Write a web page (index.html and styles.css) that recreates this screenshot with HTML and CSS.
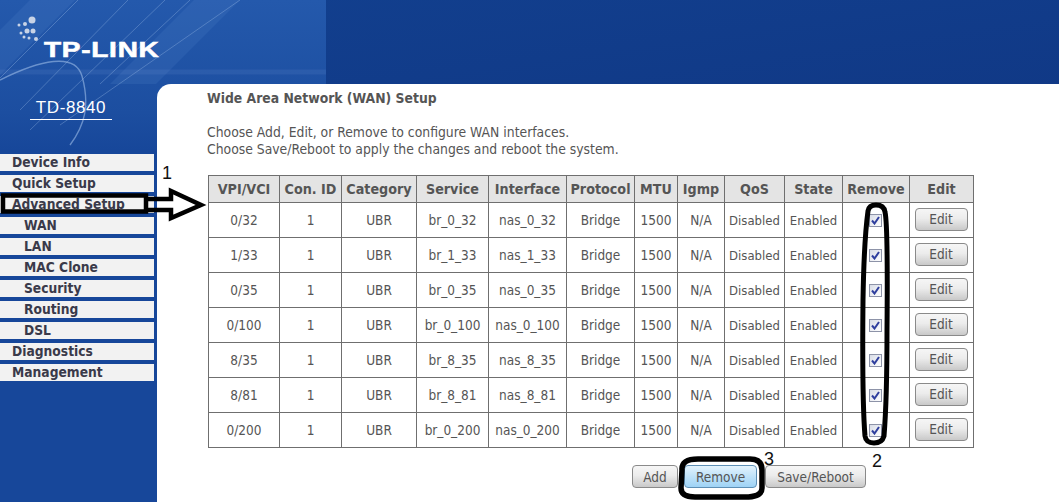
FILE: index.html
```html
<!DOCTYPE html>
<html lang="en">
<head>
<meta charset="utf-8">
<title>Wide Area Network (WAN) Setup</title>
<link rel="stylesheet" href="styles.css">
</head>
<body>
<div class="page">
  <svg class="art" width="1059" height="150" viewBox="0 0 1059 150" aria-hidden="true">
    <defs>
      <linearGradient id="top" x1="0" y1="0" x2="1" y2="1">
        <stop offset="0" stop-color="#12408f"/>
        <stop offset="1" stop-color="#103784"/>
      </linearGradient>
      <linearGradient id="panel" x1="0" y1="0" x2="0" y2="1">
        <stop offset="0" stop-color="#2459ac"/>
        <stop offset="0.75" stop-color="#1c4ea0"/>
        <stop offset="1" stop-color="#17479a"/>
      </linearGradient>
    </defs>
    <rect width="1059" height="150" fill="url(#top)"/>
    <rect width="326" height="150" fill="url(#panel)"/>
    <path d="M0 30L30 0H75L0 75Z M110 84L194 0H240L156 84Z" fill="#5f8fd6" fill-opacity=".16"/>
    <g fill="none" stroke="#9dbce8" stroke-opacity=".35">
      <path d="M0 78L78 0M20 110L128 0M30 130L165 0M60 125L240 0M100 84L190 0"/>
      <path d="M0 80C40 60 75 52 82 76C90 105 85 125 70 145" stroke-opacity=".6" stroke-width="1.4"/>
      <path d="M0 72H326" stroke-opacity=".1" stroke-width="5"/>
    </g>
    <g fill="#c8d3e6">
      <circle cx="32" cy="20" r="3.5"/><circle cx="25" cy="24" r="2"/><circle cx="19" cy="25" r="1.5"/>
      <circle cx="33" cy="31" r="2.5"/><circle cx="27" cy="31" r="2.5"/><circle cx="21" cy="33" r="1.5"/>
      <circle cx="36" cy="39" r="2"/><circle cx="29" cy="38" r="1.5"/><circle cx="24" cy="37" r="1.5"/>
    </g>
  </svg>
  <aside class="side">
    <div class="logo">TP-LINK</div>
    <div class="model">TD-8840</div>
    <nav class="menu">
      <a class="item">Device Info</a>
      <a class="item">Quick Setup</a>
      <a class="item">Advanced Setup</a>
      <a class="item sub">WAN</a>
      <a class="item sub">LAN</a>
      <a class="item sub">MAC Clone</a>
      <a class="item sub">Security</a>
      <a class="item sub">Routing</a>
      <a class="item sub">DSL</a>
      <a class="item">Diagnostics</a>
      <a class="item">Management</a>
    </nav>
  </aside>
  <main class="main">
    <h1 class="title">Wide Area Network (WAN) Setup</h1>
    <p class="intro">Choose Add, Edit, or Remove to configure WAN interfaces.<br>Choose Save/Reboot to apply the changes and reboot the system.</p>
    <table class="wan">
      <thead>
        <tr><th>VPI/VCI</th><th>Con. ID</th><th>Category</th><th>Service</th><th>Interface</th><th>Protocol</th><th>MTU</th><th>Igmp</th><th>QoS</th><th>State</th><th>Remove</th><th>Edit</th></tr>
      </thead>
      <tbody>
        <tr><td>0/32</td><td>1</td><td>UBR</td><td>br_0_32</td><td>nas_0_32</td><td>Bridge</td><td>1500</td><td>N/A</td><td class="tight">Disabled</td><td class="tight">Enabled</td><td class="ctl"><span class="check"><svg width="9" height="9" viewBox="0 0 9 9"><path d="M1 4.5L3.5 7.5L8 1" fill="none" stroke="#2f3f9e" stroke-width="2"/></svg></span></td><td class="ctl"><button class="btn edit">Edit</button></td></tr>
        <tr><td>1/33</td><td>1</td><td>UBR</td><td>br_1_33</td><td>nas_1_33</td><td>Bridge</td><td>1500</td><td>N/A</td><td class="tight">Disabled</td><td class="tight">Enabled</td><td class="ctl"><span class="check"><svg width="9" height="9" viewBox="0 0 9 9"><path d="M1 4.5L3.5 7.5L8 1" fill="none" stroke="#2f3f9e" stroke-width="2"/></svg></span></td><td class="ctl"><button class="btn edit">Edit</button></td></tr>
        <tr><td>0/35</td><td>1</td><td>UBR</td><td>br_0_35</td><td>nas_0_35</td><td>Bridge</td><td>1500</td><td>N/A</td><td class="tight">Disabled</td><td class="tight">Enabled</td><td class="ctl"><span class="check"><svg width="9" height="9" viewBox="0 0 9 9"><path d="M1 4.5L3.5 7.5L8 1" fill="none" stroke="#2f3f9e" stroke-width="2"/></svg></span></td><td class="ctl"><button class="btn edit">Edit</button></td></tr>
        <tr><td>0/100</td><td>1</td><td>UBR</td><td>br_0_100</td><td>nas_0_100</td><td>Bridge</td><td>1500</td><td>N/A</td><td class="tight">Disabled</td><td class="tight">Enabled</td><td class="ctl"><span class="check"><svg width="9" height="9" viewBox="0 0 9 9"><path d="M1 4.5L3.5 7.5L8 1" fill="none" stroke="#2f3f9e" stroke-width="2"/></svg></span></td><td class="ctl"><button class="btn edit">Edit</button></td></tr>
        <tr><td>8/35</td><td>1</td><td>UBR</td><td>br_8_35</td><td>nas_8_35</td><td>Bridge</td><td>1500</td><td>N/A</td><td class="tight">Disabled</td><td class="tight">Enabled</td><td class="ctl"><span class="check"><svg width="9" height="9" viewBox="0 0 9 9"><path d="M1 4.5L3.5 7.5L8 1" fill="none" stroke="#2f3f9e" stroke-width="2"/></svg></span></td><td class="ctl"><button class="btn edit">Edit</button></td></tr>
        <tr><td>8/81</td><td>1</td><td>UBR</td><td>br_8_81</td><td>nas_8_81</td><td>Bridge</td><td>1500</td><td>N/A</td><td class="tight">Disabled</td><td class="tight">Enabled</td><td class="ctl"><span class="check"><svg width="9" height="9" viewBox="0 0 9 9"><path d="M1 4.5L3.5 7.5L8 1" fill="none" stroke="#2f3f9e" stroke-width="2"/></svg></span></td><td class="ctl"><button class="btn edit">Edit</button></td></tr>
        <tr><td>0/200</td><td>1</td><td>UBR</td><td>br_0_200</td><td>nas_0_200</td><td>Bridge</td><td>1500</td><td>N/A</td><td class="tight">Disabled</td><td class="tight">Enabled</td><td class="ctl"><span class="check"><svg width="9" height="9" viewBox="0 0 9 9"><path d="M1 4.5L3.5 7.5L8 1" fill="none" stroke="#2f3f9e" stroke-width="2"/></svg></span></td><td class="ctl"><button class="btn edit">Edit</button></td></tr>
      </tbody>
    </table>
    <div class="actions">
      <button class="btn add">Add</button>
      <button class="btn remove">Remove</button>
      <button class="btn save">Save/Reboot</button>
    </div>
  </main>
  <svg class="marks" width="1059" height="502" viewBox="0 0 1059 502" aria-hidden="true">
    <g fill="none" stroke="#000">
      <rect x="3" y="195.500" width="143" height="16" stroke-width="4.500"/>
      <path d="M146 199H171V191L201 205L171 218V210H146" stroke-width="4.500"/>
      <path d="M868 211Q869 205 876 205Q884 205 885 212Q888 225 887 330Q887 400 884 436Q882 443 874 443Q866 443 865 436Q862 400 863 300Q864 240 868 211Z" stroke-width="5"/>
      <path d="M682 470Q681 459 698 459H750Q762 459 762 470V488Q762 497 745 497H695Q681 497 681 488Z" stroke-width="5.500"/>
    </g>
    <g class="mark-num">
      <text x="162" y="179">1</text>
      <text x="872" y="467">2</text>
      <text x="764" y="465">3</text>
    </g>
  </svg>
</div>
</body>
</html>
```
FILE: styles.css
```css
* { box-sizing: border-box; }
html, body { margin: 0; height: 100%; }
body { background: #17479a; overflow: hidden; }
.page {
  position: relative;
  width: 1059px;
  height: 502px;
  display: flex;
  background: #17479a;
  font-family: "DejaVu Sans", sans-serif;
  font-stretch: condensed;
  color: #555;
}
.art { position: absolute; top: 0; left: 0; }
.marks { position: absolute; top: 0; left: 0; pointer-events: none; }
.mark-num { font: 18px "Liberation Sans", sans-serif; fill: #111; }
.side {
  position: relative;
  width: 157px;
  flex: none;
  display: flex;
  flex-direction: column;
}
.logo {
  margin: 38px 0 0 44px;
  font: 900 22px/24px "Liberation Sans", sans-serif;
  letter-spacing: .6px;
  color: #fff;
  -webkit-text-stroke: .6px #fff;
  white-space: nowrap;
  transform: scaleX(1.27);
  transform-origin: left center;
}
.model {
  align-self: flex-start;
  width: 82px;
  margin: 36px 0 0 30px;
  padding-bottom: 1px;
  border-bottom: 1px solid #fff;
  font: 17px/20px "Liberation Sans", sans-serif;
  letter-spacing: .6px;
  color: #fff;
  text-align: center;
}
.menu { display: flex; flex-direction: column; gap: 4px; margin-top: 34px; }
.item {
  display: block;
  width: 154px;
  height: 17px;
  padding-left: 12px;
  background: #f2f2f2;
  color: #3a3a4a;
  font-size: 13.7px;
  font-weight: 700;
  line-height: 17px;
}
.item.sub { padding-left: 24px; }
.main {
  position: relative;
  flex: 1;
  margin-top: 84px;
  padding: 6px 0 0 50px;
  background: #fff;
  border-top-left-radius: 14px;
}
.title { margin: 0; font-size: 13.8px; line-height: 16px; font-weight: 700; color: #555; }
.intro { margin: 18px 0 0; font-size: 13.8px; line-height: 17px; color: #555; }
.wan {
  margin: 17px 0 0 1px;
  width: 765px;
  table-layout: fixed;
  border-collapse: collapse;
  font-size: 13.500px;
}
.wan th, .wan td { border: 1px solid #6f6f6f; padding: 0; text-align: center; white-space: nowrap; }
.wan th { height: 27px; background: #e4e4e4; font-size: 14.2px; font-weight: 700; color: #555; }
.wan td { height: 35px; color: #555; }
.wan td.tight { font-size: 13px; }
.wan td.ctl { padding: 0 1px 2px 0; }
.wan th:nth-child(1) { width: 71px; }
.wan th:nth-child(2) { width: 62px; }
.wan th:nth-child(3) { width: 75px; }
.wan th:nth-child(4) { width: 72px; }
.wan th:nth-child(5) { width: 78px; }
.wan th:nth-child(6) { width: 68px; }
.wan th:nth-child(7) { width: 43px; }
.wan th:nth-child(8) { width: 47px; }
.wan th:nth-child(9) { width: 60px; }
.wan th:nth-child(10) { width: 58px; }
.wan th:nth-child(11) { width: 67px; }
.wan th:nth-child(12) { width: 64px; }
.check {
  display: inline-flex;
  align-items: center;
  justify-content: center;
  width: 13px;
  height: 13px;
  vertical-align: middle;
  border: 1px solid #8d93a8;
  background: linear-gradient(135deg, #d8dce6, #fff);
}
.btn {
  height: 23px;
  padding: 0;
  border: 1px solid #8a8a8a;
  border-radius: 4px;
  background: linear-gradient(#f6f6f6 0, #ececec 45%, #c9c9c9 100%);
  color: #555;
  font-family: inherit;
  font-stretch: inherit;
  font-size: 13.5px;
}
.edit { display: block; width: 53px; margin: 0 auto; }
.actions { display: flex; margin: 17px 0 0 425px; }
.add { width: 46px; }
.remove {
  width: 73px;
  margin-left: 6px;
  border-color: #5d8fb5;
  background: linear-gradient(#e3f3fd 0, #bfe2f9 50%, #9fd3f5 100%);
}
.save { width: 101px; margin-left: 8px; }
```
